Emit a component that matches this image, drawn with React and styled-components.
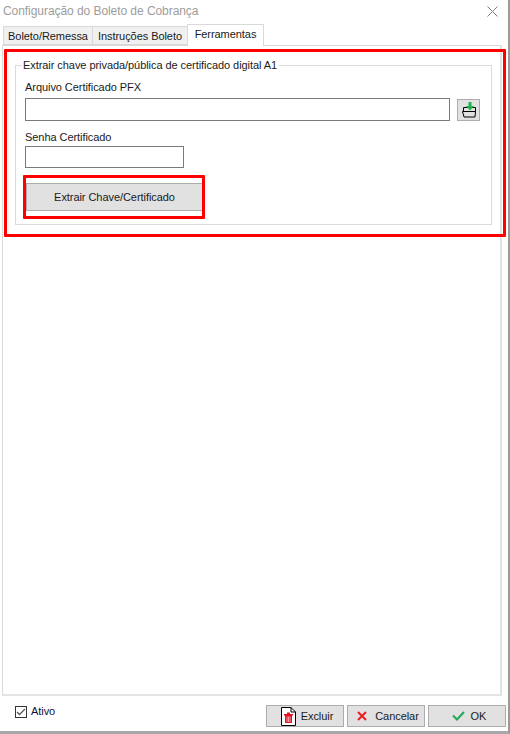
import React from 'react'
import styled, { createGlobalStyle } from 'styled-components'

const Global = createGlobalStyle`
  html, body { margin: 0; padding: 0; background: #fff; }
  body {
    font-family: "Liberation Sans", Arial, sans-serif;
    font-size: 11px;
    letter-spacing: -0.06px;
    color: #1a1a1a;
  }
`

const Window = styled.div`
  position: relative;
  width: 510px;
  height: 734px;
  box-sizing: border-box;
  background: #fff;
  border-right: 2px solid #9a9a9a;
  border-bottom: 3px solid #a8a8a8;
  display: flex;
  flex-direction: column;
  overflow: hidden;
`

const TitleBar = styled.div`
  height: 24px;
  flex: none;
  box-sizing: border-box;
  display: flex;
  align-items: center;
  justify-content: space-between;
  padding: 0 10px 2px 3px;
  font-size: 12px;
  color: #9c9c9c;
`

const TabRow = styled.div`
  display: flex;
  align-items: flex-end;
  height: 21px;
  flex: none;
  padding-left: 3px;
  position: relative;
  z-index: 1;
`

const Tab = styled.div`
  box-sizing: border-box;
  width: ${p => p.$width}px;
  height: ${p => (p.$active ? 22 : 19)}px;
  margin-bottom: ${p => (p.$active ? -1 : 0)}px;
  margin-right: -1px;
  padding-top: 3px;
  text-align: center;
  font-size: 11px;
  line-height: 13px;
  background: ${p => (p.$active ? '#fff' : '#f0f0f0')};
  border: 1px solid #d9d9d9;
  border-bottom: ${p => (p.$active ? 'none' : '1px solid #d9d9d9')};
`

const Panel = styled.div`
  flex: 1;
  margin: 0 6px 0 2px;
  border: 1px solid #d9d9d9;
  border-right: 2px solid #e3e3e3;
  border-bottom: 2px solid #e3e3e3;
  padding: 13px 8px 0 12px;
`

const Group = styled.fieldset`
  box-sizing: border-box;
  margin: 0;
  height: 166px;
  min-width: 0;
  border: 1px solid #dcdcdc;
  padding: 10px 11px 0 9px;
`

const Legend = styled.legend`
  padding: 0 2px 0 1px;
  margin-left: -3px;
  font-size: 11px;
  line-height: 12px;
`

const FieldLabel = styled.div`
  font-size: 11px;
  line-height: 13px;
  margin-bottom: ${p => p.$gap}px;
`

const FileRow = styled.div`
  display: flex;
  align-items: flex-end;
  gap: 7px;
  margin-bottom: 10px;
`

const TextBox = styled.div`
  box-sizing: border-box;
  height: ${p => p.$height}px;
  width: ${p => (p.$width ? `${p.$width}px` : 'auto')};
  flex: ${p => (p.$width ? 'none' : 1)};
  border: 1px solid #7a7a7a;
  background: #fff;
`

const IconButton = styled.div`
  box-sizing: border-box;
  flex: none;
  width: 23px;
  height: 22px;
  background: #e1e1e1;
  border: 1px solid #adadad;
  display: flex;
  align-items: center;
  justify-content: center;
`

const ExtractButton = styled.div`
  box-sizing: border-box;
  width: 177px;
  height: 28px;
  margin: 15px 0 0 1px;
  background: #e1e1e1;
  border: 1px solid #adadad;
  display: flex;
  align-items: center;
  justify-content: center;
  font-size: 11px;
`

const Footer = styled.div`
  height: 35px;
  flex: none;
  box-sizing: border-box;
  display: flex;
  align-items: flex-start;
  justify-content: space-between;
  padding: 9px 2px 0 15px;
`

const CheckLabel = styled.label`
  display: flex;
  align-items: center;
  gap: 4px;
  font-size: 11px;
  line-height: 13px;
  color: #10103a;
`

const CheckBox = styled.span`
  box-sizing: border-box;
  width: 12px;
  height: 12px;
  border: 1px solid #333;
  display: flex;
  align-items: center;
  justify-content: center;
`

const Actions = styled.div`
  display: flex;
  gap: 3px;
`

const ActionButton = styled.div`
  box-sizing: border-box;
  width: 78px;
  height: 22px;
  padding-left: 4px;
  background: #e1e1e1;
  border: 1px solid #adadad;
  display: flex;
  align-items: center;
  justify-content: center;
  gap: ${p => p.$gap}px;
  font-size: 11px;
`

const Highlight = styled.div`
  position: absolute;
  box-sizing: border-box;
  left: ${p => p.$x}px;
  top: ${p => p.$y}px;
  width: ${p => p.$w}px;
  height: ${p => p.$h}px;
  border: 3px solid #ff0000;
  border-radius: 1px;
  pointer-events: none;
`

const FolderIcon = () => (
  <svg width="17" height="17" viewBox="0 0 17 17">
    <path d="M3.500 10V5.500h12V10" fill="#e1e1e1" stroke="#000" />
    <path d="M2.500 9.500h13l-.5 5.500H4z" fill="#e1e1e1" stroke="#000" />
    <path d="M8.500 0h3v4h2.500L10 8.500 6 4h2.500z" fill="#22b14c" />
  </svg>
)

const TrashIcon = () => (
  <svg width="15" height="19" viewBox="0 0 15 19" style={{ marginTop: 1 }}>
    <path d="M.5.500h9.500l4.500 4.500v13.500H.5z" fill="#fff" stroke="#000" />
    <path d="M10 .500v4.500h4.500" fill="none" stroke="#000" />
    <path d="M3 7h9v1.500H3zM6 5.500h3V7H6zM4 8.500h7V16H4z" fill="#e81123" />
    <path d="M6 9.500V15M7.500 9.500V15M9 9.500V15" stroke="#fff" strokeWidth=".6" />
  </svg>
)

const CrossIcon = () => (
  <svg width="10" height="10" viewBox="0 0 10 10">
    <path d="M1 1l8 8M9 1l-8 8" stroke="#ed1c24" strokeWidth="2" fill="none" />
  </svg>
)

const CheckIcon = () => (
  <svg width="13" height="10" viewBox="0 0 13 10">
    <path d="M1 4.500l4 4L12 1" stroke="#22a95a" strokeWidth="2" fill="none" />
  </svg>
)

const CloseIcon = () => (
  <svg width="11" height="11" viewBox="0 0 11 11">
    <path d="M.5.500l10 10M10.500.500l-10 10" stroke="#808080" strokeWidth="1" fill="none" />
  </svg>
)

const TickIcon = () => (
  <svg width="10" height="8" viewBox="0 0 10 8">
    <path d="M1 4l2.500 2.500L9 1" stroke="#555" strokeWidth="1.300" fill="none" />
  </svg>
)

export default function App() {
  return (
    <>
      <Global />
      <Window>
        <TitleBar>
          <span>Configuração do Boleto de Cobrança</span>
          <CloseIcon />
        </TitleBar>
        <TabRow>
          <Tab $width={90}>Boleto/Remessa</Tab>
          <Tab $width={96}>Instruções Boleto</Tab>
          <Tab $width={77} $active>Ferramentas</Tab>
        </TabRow>
        <Panel>
          <Group>
            <Legend>Extrair chave privada/pública de certificado digital A1</Legend>
            <FieldLabel $gap={4}>Arquivo Certificado PFX</FieldLabel>
            <FileRow>
              <TextBox $height={23} />
              <IconButton><FolderIcon /></IconButton>
            </FileRow>
            <FieldLabel $gap={2}>Senha Certificado</FieldLabel>
            <TextBox $height={22} $width={159} />
            <ExtractButton>Extrair Chave/Certificado</ExtractButton>
          </Group>
        </Panel>
        <Footer>
          <CheckLabel>
            <CheckBox><TickIcon /></CheckBox>
            Ativo
          </CheckLabel>
          <Actions>
            <ActionButton $gap={5}><TrashIcon />Excluir</ActionButton>
            <ActionButton $gap={8}><CrossIcon />Cancelar</ActionButton>
            <ActionButton $gap={6}><CheckIcon />OK</ActionButton>
          </Actions>
        </Footer>
        <Highlight $x={4} $y={49} $w={502} $h={188} />
        <Highlight $x={23} $y={175} $w={182} $h={44} />
      </Window>
    </>
  )
}
